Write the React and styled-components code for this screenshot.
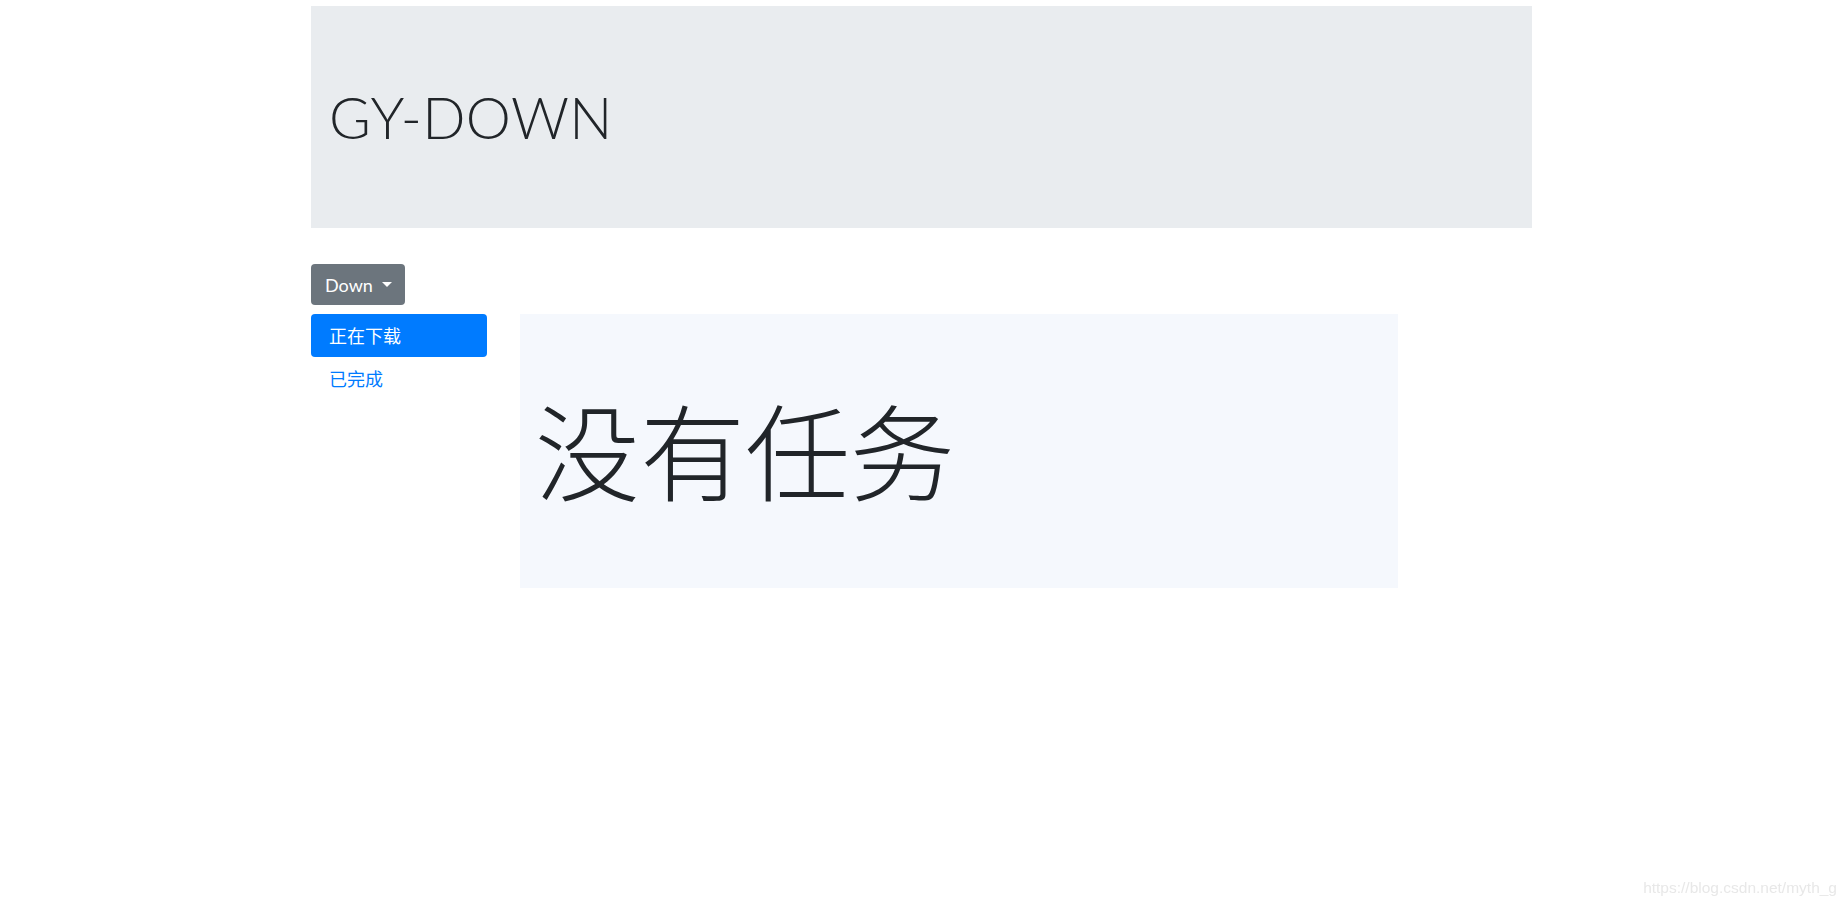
import React, { useState } from 'react';
import styled, { createGlobalStyle } from 'styled-components';

const GlobalStyle = createGlobalStyle`
  body {
    margin: 0;
    background: #fff;
    color: #212529;
    font-family: Lato, 'Noto Sans CJK SC', sans-serif;
  }
`;

const Page = styled.div`
  width: 1221px;
  margin: 0 auto;
  padding-top: 6px;
  padding-right: 4px;
`;

const Jumbotron = styled.div`
  background: #e9ecef;
  height: 222px;
  padding: 0 18px;
  display: flex;
  align-items: center;
  margin-bottom: 36px;
`;

const Title = styled.h1`
  margin: 0;
  font-family: Lato, 'Noto Sans', sans-serif;
  font-weight: 300;
  font-size: 57px;
  letter-spacing: 0.3px;
  color: #212529;
`;

const DropButton = styled.button`
  display: inline-flex;
  align-items: center;
  gap: 9px;
  height: 41px;
  padding: 0 13px 0 14px;
  background: #6c757d;
  color: #fff;
  border: none;
  border-radius: 4px;
  font-family: Lato, 'Noto Sans', sans-serif;
  font-size: 18px;
  cursor: pointer;
`;

const Caret = styled.span`
  width: 0;
  height: 0;
  border-left: 5px solid transparent;
  border-right: 5px solid transparent;
  border-top: 5px solid #fff;
`;

const Row = styled.div`
  display: flex;
  gap: 33px;
  margin-top: 9px;
`;

const Nav = styled.nav`
  width: 176px;
  display: flex;
  flex-direction: column;
`;

const NavItem = styled.a`
  display: block;
  height: 43px;
  line-height: 43px;
  padding: 0 18px;
  border-radius: 4px;
  font-family: 'Noto Sans CJK SC', sans-serif;
  font-size: 18px;
  text-decoration: none;
  cursor: pointer;
  color: ${props => props.active ? '#fff' : '#007bff'};
  background: ${props => props.active ? '#007bff' : 'transparent'};
`;

const Panel = styled.div`
  width: 878px;
  height: 274px;
  background: #f5f8fd;
  display: flex;
  align-items: center;
  padding: 0 15px;
  box-sizing: border-box;
`;

const Empty = styled.h1`
  margin: 0 0 8px;
  font-family: 'Noto Sans CJK SC', sans-serif;
  font-weight: 300;
  font-size: 105px;
  color: #212529;
`;

const Watermark = styled.div`
  position: fixed;
  right: 10px;
  bottom: 8px;
  font-family: 'Liberation Sans', Arial, sans-serif;
  font-size: 15.5px;
  color: #e8e8e8;
`;

const tabs = ['正在下载', '已完成'];

function App() {
  const [tab, setTab] = useState(0);

  return (
    <>
      <GlobalStyle />
      <Page>
        <Jumbotron>
          <Title>GY-DOWN</Title>
        </Jumbotron>
        <DropButton>
          Down <Caret />
        </DropButton>
        <Row>
          <Nav>
            {tabs.map((item, i) => (
              <NavItem key={i} active={tab === i} onClick={() => setTab(i)}>
                {item}
              </NavItem>
            ))}
          </Nav>
          <Panel>
            <Empty>没有任务</Empty>
          </Panel>
        </Row>
      </Page>
      <Watermark>https://blog.csdn.net/myth_g</Watermark>
    </>
  );
}

export default App;
